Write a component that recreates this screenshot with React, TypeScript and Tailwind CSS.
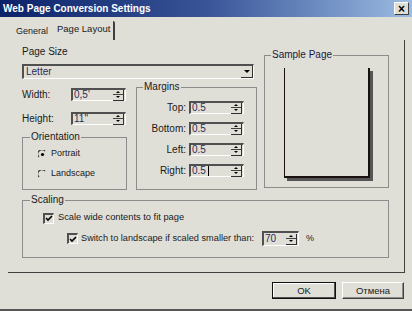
import React from "react";

const Spin = () => (
  <div className="flex flex-col w-[11px] h-[11px] mr-[1px] border-r border-b border-[#303030]">
    <div className="flex-1 flex items-center justify-center border-b border-[#404040]">
      <div className="w-0 h-0 border-l-[2px] border-r-[2px] border-b-[2px] border-transparent border-b-black" />
    </div>
    <div className="flex-1 flex items-center justify-center">
      <div className="w-0 h-0 border-l-[2px] border-r-[2px] border-t-[2px] border-transparent border-t-black" />
    </div>
  </div>
);

const Field = ({
  value,
  className,
  caret,
}: {
  value: string;
  className: string;
  caret?: boolean;
}) => (
  <div
    className={
      "flex items-center justify-between border-t-2 border-l-2 border-t-[#505050] border-l-[#505050] border-b border-r border-b-white border-r-white " +
      className
    }
  >
    <span className="pl-[1px] text-[10px] leading-none text-[#2c2c58] flex items-center">
      {value}
      {caret && <span className="ml-[2px] w-[1px] h-[10px] bg-black" />}
    </span>
    <Spin />
  </div>
);

const Check = () => (
  <div className="w-[11px] h-[11px] border-t-2 border-l-2 border-t-[#505050] border-l-[#505050] border-b border-r border-b-white border-r-white flex items-center justify-center">
    <svg width="8" height="7" viewBox="0 0 8 7">
      <path d="M1 3 L3 5 L7 1" stroke="black" strokeWidth="1.6" fill="none" />
    </svg>
  </div>
);

const Radio = ({ on }: { on?: boolean }) => (
  <svg width="9" height="9" viewBox="0 0 9 9">
    <path d="M1 7 A4 4 0 0 1 7 1" stroke="#404040" strokeWidth="1.3" fill="none" />
    {on && <circle cx="4.5" cy="4.5" r="1.6" fill="black" />}
  </svg>
);

export default function App() {
  return (
    <div className="w-[412px] h-[311px] bg-[#dfdfd8] flex flex-col border-b-2 border-[#555555] font-['Liberation_Sans',Arial,sans-serif] text-[#1a1a1a] overflow-hidden">
      {/* title bar */}
      <div className="h-[17px] flex items-center justify-between bg-gradient-to-r from-[#0c2268] via-[#3a5498] to-[#9cbce2] pl-[3px] pr-[3px]">
        <span className="text-white font-bold text-[10px] leading-none">Web Page Conversion Settings</span>
        <div className="w-[15px] h-[13px] bg-[#dfdfd8] border-t border-l border-white border-b border-r border-b-[#404040] border-r-[#404040] flex items-center justify-center text-[12px] font-bold leading-none text-black">
          ×
        </div>
      </div>

      {/* tabs */}
      <div className="h-[23px] flex items-end pl-[10px]">
        <div className="w-[42px] h-[16px] pl-[6px] flex items-center text-[9px] whitespace-nowrap">General</div>
        <div className="w-[63px] h-[19px] pl-[5px] pb-[2px] flex items-center text-[9.5px] whitespace-nowrap border-r-2 border-[#404040] rounded-tr-[2px]">
          Page Layout
        </div>
      </div>

      {/* page */}
      <div className="ml-[8px] w-[397px] h-[233px] border-r border-b border-[#404040] pl-[14px] pt-[6px] flex flex-col">
        <div className="flex items-start">
          <div className="w-[235px] flex flex-col">
            <div className="h-[12px] text-[10px] leading-[12px]">Page Size</div>
            <div className="mt-[6px] w-[232px] h-[15px] flex items-center justify-between border-t-2 border-l-2 border-t-[#505050] border-l-[#505050] border-b border-r border-b-white border-r-white">
              <span className="pl-[2px] text-[10px] leading-none text-[#2c2c58]">Letter</span>
              <div className="w-[12px] h-[12px] border-r border-b border-[#303030] flex items-center justify-center">
                <div className="w-0 h-0 border-l-[3px] border-r-[3px] border-t-[3px] border-transparent border-t-black" />
              </div>
            </div>
            <div className="mt-[8px] flex items-start">
              <div className="w-[105px] flex flex-col">
                <div className="mt-[1px] h-[13px] flex items-center">
                  <span className="w-[49px] text-[10px]">Width:</span>
                  <Field value="0,5'" className="w-[55px] h-[13px]" />
                </div>
                <div className="mt-[11px] h-[13px] flex items-center">
                  <span className="w-[49px] text-[10px]">Height:</span>
                  <Field value={'11"'} className="w-[55px] h-[13px]" />
                </div>
                <div className="relative mt-[12px] h-[53px] w-[105px] border border-[#8c8c8c] pt-[11px] pl-[15px] flex flex-col gap-[10px]">
                  <span className="absolute -top-[7px] left-[7px] px-[1px] bg-[#dfdfd8] text-[10px] leading-[12px]">Orientation</span>
                  <div className="h-[10px] flex items-center gap-[4px] text-[9px]">
                    <Radio on />
                    <span>Portrait</span>
                  </div>
                  <div className="h-[10px] flex items-center gap-[4px] text-[9px]">
                    <Radio />
                    <span>Landscape</span>
                  </div>
                </div>
              </div>
              <div className="relative ml-[9px] w-[121px] h-[103px] border border-[#8c8c8c] pt-[13px] flex flex-col gap-[8px]">
                <span className="absolute -top-[7px] left-[6px] px-[1px] bg-[#dfdfd8] text-[10px] leading-[12px]">Margins</span>
                {[
                  ["Top:", false],
                  ["Bottom:", false],
                  ["Left:", false],
                  ["Right:", true],
                ].map(([l, c]) => (
                  <div key={l as string} className="h-[13px] flex items-center">
                    <span className="w-[50px] text-right text-[10px] pr-[1px]">{l as string}</span>
                    <Field value="0.5" caret={c as boolean} className="ml-[2px] w-[55px] h-[13px]" />
                  </div>
                ))}
              </div>
            </div>
          </div>
          <div className="relative ml-[7px] mt-[9px] w-[125px] h-[133px] border border-[#8c8c8c] pt-[12px] pl-[19px]">
            <span className="absolute -top-[7px] left-[6px] px-[1px] bg-[#dfdfd8] text-[10px] leading-[12px] text-[#1a1a40]">Sample Page</span>
            <div className="w-[86px] h-[110px] border-l border-r-2 border-b-2 border-[#1a1010] shadow-[3px_3px_0_#555555]" />
          </div>
        </div>

        <div className="relative mt-[10px] w-[367px] h-[58px] border border-[#8c8c8c] flex flex-col">
          <span className="absolute -top-[7px] left-[7px] px-[1px] bg-[#dfdfd8] text-[10px] leading-[12px]">Scaling</span>
          <div className="mt-[11px] ml-[20px] h-[12px] flex items-center gap-[4px]">
            <Check />
            <span className="text-[9.3px] whitespace-nowrap">Scale wide contents to fit page</span>
          </div>
          <div className="mt-[7px] ml-[44px] h-[15px] flex items-center">
            <Check />
            <span className="ml-[3px] w-[181px] text-[9.2px] whitespace-nowrap">Switch to landscape if scaled smaller than:</span>
            <Field value="70" className="w-[37px] h-[15px]" />
            <span className="ml-[7px] text-[9px]">%</span>
          </div>
        </div>
      </div>

      {/* buttons */}
      <div className="mt-[9px] flex justify-end gap-[6px] pr-[8px]">
        <button className="w-[64px] h-[17px] border border-[#101010] shadow-[inset_-1px_-1px_0_#505050,inset_1px_1px_0_#ffffff] text-[9.5px] leading-none">
          OK
        </button>
        <button className="w-[62px] h-[17px] border-t border-l border-white border-b border-r border-b-[#404040] border-r-[#404040] shadow-[inset_-1px_-1px_0_#8c8c8c] text-[9.5px] leading-none">
          Отмена
        </button>
      </div>
    </div>
  );
}
